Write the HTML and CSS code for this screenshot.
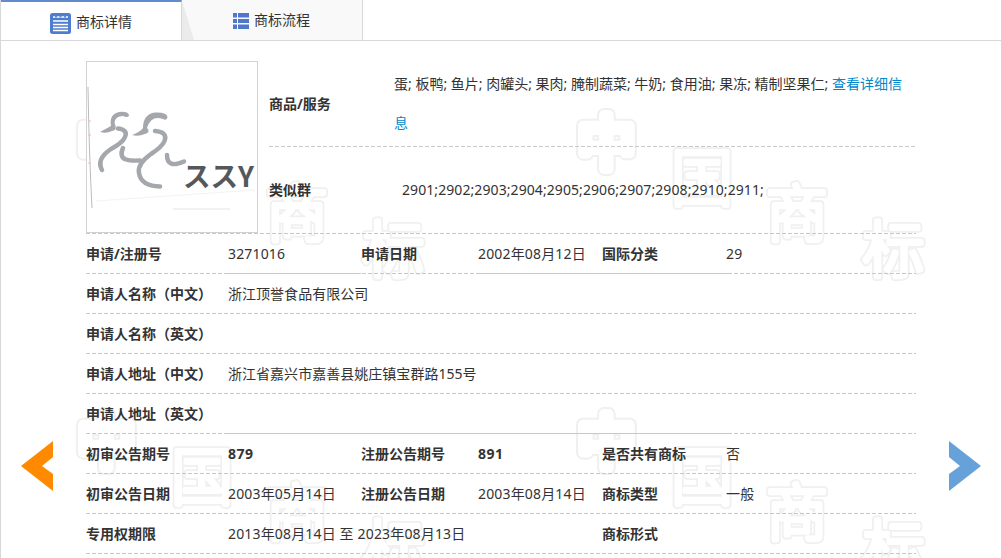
FILE: index.html
```html
<!DOCTYPE html>
<html lang="zh-CN">
<head>
<meta charset="utf-8">
<title>商标详情</title>
<link rel="stylesheet" href="styles.css">
</head>
<body>
<div class="page">
  <nav class="tabs">
    <a class="tab active">
      <svg class="tab-icon" width="21" height="21" viewBox="0 0 21 21"><rect width="21" height="21" rx="2.5" fill="#4f7dce"/><path d="M3 4h15M3 8h15M3 11.500h15M3 14.500h15M3 17.500h15" stroke="#fff" stroke-width="1.4"/><path d="M5 2.500h2v2H5zM9.500 2.500h2v2h-2zM14 2.500h2v2h-2z" fill="#5f88d4"/></svg>
      <span>商标详情</span>
    </a>
    <a class="tab second">
      <svg class="tab-icon" width="16" height="16" viewBox="0 0 16 16"><path d="M0 0h4v4.500H0zM5 0h11v4.500H5zM0 6h4v4H0zM5 6h11v4H5zM0 11.500h4V16H0zM5 11.500h11V16H5z" fill="#4f78cd"/></svg>
      <span>商标流程</span>
    </a>
  </nav>
  <main class="panel">
    <svg class="watermark" width="1000" height="517" aria-hidden="true">
      <defs>
        <pattern id="mark" x="64" y="60" width="500" height="299" patternUnits="userSpaceOnUse">
          <g class="wm-outer bold"><text x="12.500" y="62.500">中</text></g>
          <g class="wm-inner bold"><text x="12.500" y="62.500">中</text></g>
          <g class="wm-outer"><text x="106" y="100">国</text><text x="201" y="135.500">商</text><text x="297.500" y="172">标</text></g>
          <g class="wm-inner"><text x="106" y="100">国</text><text x="201" y="135.500">商</text><text x="297.500" y="172">标</text></g>
        </pattern>
      </defs>
      <rect width="1000" height="517" fill="url(#mark)"/>
    </svg>
    <div class="side prev"><svg width="32" height="50" viewBox="0 0 32 50"><path d="M32 0v16L21 25l11 8v17L0 25z" fill="#ff8a00"/></svg></div>
    <div class="detail">
      <section class="top">
        <div class="photo">
          <svg width="170" height="170" viewBox="0 0 170 170">
            <path d="M1 25Q2 90 5 146" fill="none" stroke="#aaa" stroke-width=".8"/>
            <path d="M9 139L168 128" stroke="#f3f3f3" fill="none"/>
            <path d="M86 147H143" stroke="#ececec" stroke-width="1.5"/>
            <path d="M1 59h3M1 73h3M1 101h3" stroke="#f2b8c0"/>
            <g fill="#a4a7ab">
              <path d="M13 70L24 64Q22 52 32 50Q42 49 42 54Q40 56 36 54Q28 54 27.500 61Q31 68 25 69Q19 72 13 70Z"/>
              <path d="M45 73Q53 70 56 66Q56 52 68 50.500Q80 50 80.500 55Q80 59 76 57Q64 53 60 66Q64 70 58 72Q51 75 45 73Z"/>
            </g>
            <g class="strokes">
              <path d="M31 66.500Q42 68 37.500 76Q35 81 24 87Q9 97 15 108"/>
              <path d="M68 69Q81 70 77.500 79Q75 85 64 92Q50 102 52 111Q54 124 73 124.500"/>
              <path d="M36 86Q32 95 39 97.500Q43 99 53 98.500"/>
              <path d="M80 93Q80 107 97 99.500"/>
            </g>
            <text class="logo-word" x="96" y="125" textLength="71" lengthAdjust="spacingAndGlyphs">ススY</text>
          </svg>
        </div>
        <div class="top-info">
          <div class="goods"><b>商品/服务</b><p>蛋; 板鸭; 鱼片; 肉罐头; 果肉; 腌制蔬菜; 牛奶; 食用油; 果冻; 精制坚果仁; <a>查看详细信<br>息</a></p></div>
          <div class="groups"><b>类似群</b><p>2901;2902;2903;2904;2905;2906;2907;2908;2910;2911;</p></div>
        </div>
      </section>
      <div class="row mixed"><b>申请/注册号</b><span>3271016</span><b>申请日期</b><span>2002年08月12日</span><b>国际分类</b><span>29</span></div>
      <div class="row"><b>申请人名称（中文）</b><span class="wide">浙江顶誉食品有限公司</span></div>
      <div class="row"><b>申请人名称（英文）</b></div>
      <div class="row"><b>申请人地址（中文）</b><span class="wide">浙江省嘉兴市嘉善县姚庄镇宝群路155号</span></div>
      <div class="row dense"><b>申请人地址（英文）</b></div>
      <div class="row"><b>初审公告期号</b><b class="issue">879</b><b>注册公告期号</b><b class="issue">891</b><b>是否共有商标</b><span>否</span></div>
      <div class="row"><b>初审公告日期</b><span>2003年05月14日</span><b>注册公告日期</b><span>2003年08月14日</span><b>商标类型</b><span>一般</span></div>
      <div class="row"><b>专用权期限</b><span class="term">2013年08月14日 至 2023年08月13日</span><b>商标形式</b></div>
    </div>
    <div class="side next"><svg width="32" height="50" viewBox="0 0 32 50"><path d="M0 0v16l11 9-11 8v17l32-25z" fill="#66a2d9"/></svg></div>
  </main>
</div>
</body>
</html>
```
FILE: styles.css
```css
* { box-sizing: border-box; }
body {
  margin: 0;
  background: #fff;
  color: #333;
  font: 14px/20px "Noto Sans", "Noto Sans CJK SC", sans-serif;
}
p { margin: 0; }
.page { width: 1001px; height: 558px; overflow: hidden; border-left: 1px solid #d8d8d8; }
.tabs { display: flex; height: 41px; border-bottom: 1px solid #d8d8d8; }
.tab { display: flex; height: 40px; border-right: 1px solid #d8d8d8; }
.tab span { margin-left: 5px; white-space: nowrap; }
.active { width: 181px; border-top: 2px solid #638acc; padding: 10px 0 0 49px; }
.active .tab-icon { margin-top: 1px; }
.second {
  width: 181px;
  padding: 10px 0 0 51px;
  background: linear-gradient(73deg, #ebebeb 11px, #f9f9f9 12px);
}
.second .tab-icon { margin-top: 3px; }
.panel { position: relative; display: flex; height: 517px; }
.watermark { position: absolute; left: 0; top: 0; z-index: -1; }
.watermark text { font: 300 62px "Noto Sans CJK SC", sans-serif; stroke-linejoin: round; }
.watermark .bold text { font-weight: 400; font-size: 58px; }
.wm-outer { fill: #f0f0f0; stroke: #f0f0f0; stroke-width: 8px; }
.wm-inner { fill: #fff; stroke: #fff; stroke-width: 4.5px; }
.wm-outer.bold { stroke-width: 14px; }
.wm-inner.bold { stroke-width: 10px; }
.side { flex: none; width: 85px; padding-top: 400px; }
.prev { padding-left: 20px; }
.next { padding-left: 33px; }
.side svg { display: block; }
.detail { flex: none; width: 830px; padding-top: 20px; }
.top, .row, .goods {
  background: repeating-linear-gradient(90deg, #c8c8c8 0 4px, transparent 4px 6px) bottom / 100% 1px no-repeat;
}
.top { display: flex; height: 173px; gap: 11px; }
.photo { width: 172px; height: 172px; background: #fff; border: 1px solid #d2d2d2; }
.photo svg { display: block; }
.strokes { fill: none; stroke: #a4a7ab; stroke-width: 4.5px; stroke-linecap: round; }
.logo-word { font: 700 28px "Noto Sans CJK JP", sans-serif; fill: #54585c; }
.top-info { width: 647px; }
.goods { display: flex; height: 86px; padding-top: 3px; }
.goods b { width: 125px; padding-top: 30px; }
.goods p { line-height: 39px; white-space: nowrap; }
.goods a { color: #0088cc; }
.groups { display: flex; padding-top: 33px; }
.groups b { width: 133px; }
.groups p { letter-spacing: .08px; }
.row {
  display: grid;
  grid-template-columns: 142px 133px 117px 124px 124px 190px;
  height: 40px;
  line-height: 40px;
  white-space: nowrap;
}
.row span { letter-spacing: .16px; }
.row .wide { grid-column: 2 / -1; letter-spacing: .03px; }
.term { grid-column: 2 / 5; }
.issue { letter-spacing: .5px; }
.mixed {
  background:
    repeating-linear-gradient(90deg, #c8c8c8 0 5px, transparent 5px 6px) 141px 100% / 134px 1px no-repeat,
    repeating-linear-gradient(90deg, #c8c8c8 0 5px, transparent 5px 6px) 391px 100% / 254px 1px no-repeat,
    repeating-linear-gradient(90deg, #c8c8c8 0 4px, transparent 4px 6px) bottom / 100% 1px no-repeat;
}
.dense {
  background:
    repeating-linear-gradient(90deg, #c8c8c8 0 5px, transparent 5px 6px) 141px 100% / 504px 1px no-repeat,
    repeating-linear-gradient(90deg, #c8c8c8 0 4px, transparent 4px 6px) bottom / 100% 1px no-repeat;
}
```
